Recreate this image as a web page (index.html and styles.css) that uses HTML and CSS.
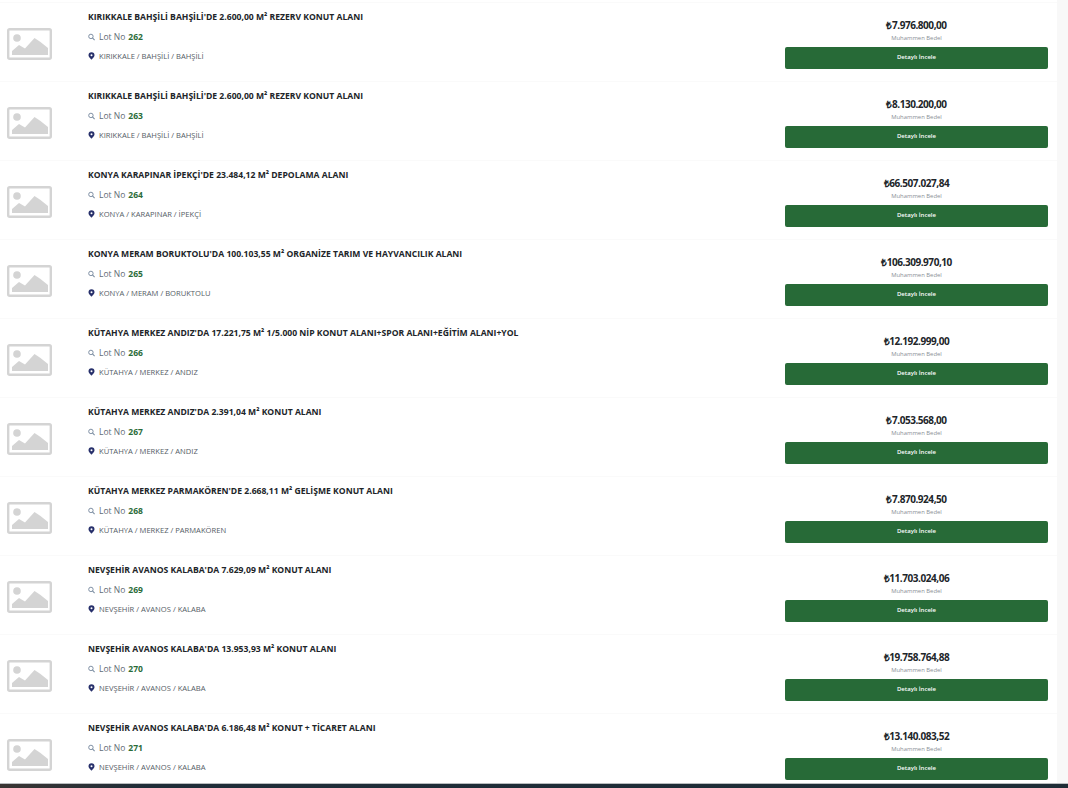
FILE: index.html
```html
<!DOCTYPE html>
<html lang="tr">
<head>
    <meta charset="utf-8">
    <title>Lot Listesi</title>
    <link rel="stylesheet" href="styles.css">
</head>
<body>
    <svg class="defs" width="0" height="0">
        <symbol id="ph" viewBox="0 0 45 32">
            <rect x="1.2" y="1.2" width="42.600" height="29.600" rx="1.500" fill="#fff" stroke="#d4d4d4" stroke-width="2.400"/>
            <circle cx="10" cy="10" r="3.800" fill="#d4d4d4"/>
            <path d="M5 27v-4l7-6 6 3.500 9.500-10.500 6 4 7.500 6v7z" fill="#d4d4d4"/>
        </symbol>
        <symbol id="search" viewBox="0 0 12 12">
            <circle cx="5" cy="5" r="3.800" fill="none" stroke="#7d8fa3" stroke-width="1.700"/>
            <path d="M7.600 7.600l3.800 3.800" stroke="#7d8fa3" stroke-width="2"/>
        </symbol>
        <symbol id="pin" viewBox="0 0 10 12">
            <path d="M5 .5a4.500 4.500 0 0 0-4.500 4.500c0 2.800 4.500 6.500 4.500 6.500s4.500-3.700 4.500-6.500a4.500 4.500 0 0 0-4.500-4.500z" fill="#27306b"/>
            <circle cx="5" cy="4.800" r="1.500" fill="#fff"/>
        </symbol>
    </svg>

    <main class="list">
        <div class="lot">
            <svg class="thumb"><use href="#ph"/></svg>
            <div class="info">
                <h3>KIRIKKALE BAHŞİLİ BAHŞİLİ'DE 2.600,00 M² REZERV KONUT ALANI</h3>
                <p class="no"><svg class="ico"><use href="#search"/></svg>Lot No <b>262</b></p>
                <p class="place"><svg class="ico"><use href="#pin"/></svg>KIRIKKALE / BAHŞİLİ / BAHŞİLİ</p>
            </div>
            <div class="side">
                <strong>₺7.976.800,00</strong>
                <small>Muhammen Bedel</small>
                <a class="btn">Detaylı İncele</a>
            </div>
        </div>
        <div class="lot">
            <svg class="thumb"><use href="#ph"/></svg>
            <div class="info">
                <h3>KIRIKKALE BAHŞİLİ BAHŞİLİ'DE 2.600,00 M² REZERV KONUT ALANI</h3>
                <p class="no"><svg class="ico"><use href="#search"/></svg>Lot No <b>263</b></p>
                <p class="place"><svg class="ico"><use href="#pin"/></svg>KIRIKKALE / BAHŞİLİ / BAHŞİLİ</p>
            </div>
            <div class="side">
                <strong>₺8.130.200,00</strong>
                <small>Muhammen Bedel</small>
                <a class="btn">Detaylı İncele</a>
            </div>
        </div>
        <div class="lot">
            <svg class="thumb"><use href="#ph"/></svg>
            <div class="info">
                <h3>KONYA KARAPINAR İPEKÇİ'DE 23.484,12 M² DEPOLAMA ALANI</h3>
                <p class="no"><svg class="ico"><use href="#search"/></svg>Lot No <b>264</b></p>
                <p class="place"><svg class="ico"><use href="#pin"/></svg>KONYA / KARAPINAR / İPEKÇİ</p>
            </div>
            <div class="side">
                <strong>₺66.507.027,84</strong>
                <small>Muhammen Bedel</small>
                <a class="btn">Detaylı İncele</a>
            </div>
        </div>
        <div class="lot">
            <svg class="thumb"><use href="#ph"/></svg>
            <div class="info">
                <h3>KONYA MERAM BORUKTOLU'DA 100.103,55 M² ORGANİZE TARIM VE HAYVANCILIK ALANI</h3>
                <p class="no"><svg class="ico"><use href="#search"/></svg>Lot No <b>265</b></p>
                <p class="place"><svg class="ico"><use href="#pin"/></svg>KONYA / MERAM / BORUKTOLU</p>
            </div>
            <div class="side">
                <strong>₺106.309.970,10</strong>
                <small>Muhammen Bedel</small>
                <a class="btn">Detaylı İncele</a>
            </div>
        </div>
        <div class="lot">
            <svg class="thumb"><use href="#ph"/></svg>
            <div class="info">
                <h3>KÜTAHYA MERKEZ ANDIZ'DA 17.221,75 M² 1/5.000 NİP KONUT ALANI+SPOR ALANI+EĞİTİM ALANI+YOL</h3>
                <p class="no"><svg class="ico"><use href="#search"/></svg>Lot No <b>266</b></p>
                <p class="place"><svg class="ico"><use href="#pin"/></svg>KÜTAHYA / MERKEZ / ANDIZ</p>
            </div>
            <div class="side">
                <strong>₺12.192.999,00</strong>
                <small>Muhammen Bedel</small>
                <a class="btn">Detaylı İncele</a>
            </div>
        </div>
        <div class="lot">
            <svg class="thumb"><use href="#ph"/></svg>
            <div class="info">
                <h3>KÜTAHYA MERKEZ ANDIZ'DA 2.391,04 M² KONUT ALANI</h3>
                <p class="no"><svg class="ico"><use href="#search"/></svg>Lot No <b>267</b></p>
                <p class="place"><svg class="ico"><use href="#pin"/></svg>KÜTAHYA / MERKEZ / ANDIZ</p>
            </div>
            <div class="side">
                <strong>₺7.053.568,00</strong>
                <small>Muhammen Bedel</small>
                <a class="btn">Detaylı İncele</a>
            </div>
        </div>
        <div class="lot">
            <svg class="thumb"><use href="#ph"/></svg>
            <div class="info">
                <h3>KÜTAHYA MERKEZ PARMAKÖREN'DE 2.668,11 M² GELİŞME KONUT ALANI</h3>
                <p class="no"><svg class="ico"><use href="#search"/></svg>Lot No <b>268</b></p>
                <p class="place"><svg class="ico"><use href="#pin"/></svg>KÜTAHYA / MERKEZ / PARMAKÖREN</p>
            </div>
            <div class="side">
                <strong>₺7.870.924,50</strong>
                <small>Muhammen Bedel</small>
                <a class="btn">Detaylı İncele</a>
            </div>
        </div>
        <div class="lot">
            <svg class="thumb"><use href="#ph"/></svg>
            <div class="info">
                <h3>NEVŞEHİR AVANOS KALABA'DA 7.629,09 M² KONUT ALANI</h3>
                <p class="no"><svg class="ico"><use href="#search"/></svg>Lot No <b>269</b></p>
                <p class="place"><svg class="ico"><use href="#pin"/></svg>NEVŞEHİR / AVANOS / KALABA</p>
            </div>
            <div class="side">
                <strong>₺11.703.024,06</strong>
                <small>Muhammen Bedel</small>
                <a class="btn">Detaylı İncele</a>
            </div>
        </div>
        <div class="lot">
            <svg class="thumb"><use href="#ph"/></svg>
            <div class="info">
                <h3>NEVŞEHİR AVANOS KALABA'DA 13.953,93 M² KONUT ALANI</h3>
                <p class="no"><svg class="ico"><use href="#search"/></svg>Lot No <b>270</b></p>
                <p class="place"><svg class="ico"><use href="#pin"/></svg>NEVŞEHİR / AVANOS / KALABA</p>
            </div>
            <div class="side">
                <strong>₺19.758.764,88</strong>
                <small>Muhammen Bedel</small>
                <a class="btn">Detaylı İncele</a>
            </div>
        </div>
        <div class="lot">
            <svg class="thumb"><use href="#ph"/></svg>
            <div class="info">
                <h3>NEVŞEHİR AVANOS KALABA'DA 6.186,48 M² KONUT + TİCARET ALANI</h3>
                <p class="no"><svg class="ico"><use href="#search"/></svg>Lot No <b>271</b></p>
                <p class="place"><svg class="ico"><use href="#pin"/></svg>NEVŞEHİR / AVANOS / KALABA</p>
            </div>
            <div class="side">
                <strong>₺13.140.083,52</strong>
                <small>Muhammen Bedel</small>
                <a class="btn">Detaylı İncele</a>
            </div>
        </div>
    </main>
    <div class="taskbar"></div>
</body>
</html>
```

FILE: styles.css
```css
html, body { margin: 0; height: 100%; overflow: hidden; }
body { display: flex; flex-direction: column; background: #f8f8f8; font-family: "Open Sans", sans-serif; color: #212529; }
.defs { display: block; height: 0; }
.list { flex: 1; min-height: 0; overflow: hidden; width: 1057px; padding-top: 2px; background: #fff; box-sizing: border-box; }
.lot { display: flex; height: 79px; box-sizing: border-box; border-top: 1px solid #fafafa; flex-shrink: 0; }
.thumb { width: 45px; height: 32px; margin: 25px 0 0 7px; flex-shrink: 0; }
.info { flex: 1; padding: 8px 0 0 36px; }
.info h3 { margin: 0; font-size: 8.600px; line-height: 12px; font-weight: 700; color: #212529; }
.no { display: flex; align-items: center; margin: 8px 0 0; font-size: 8.500px; line-height: 12px; color: #5f6b76; }
.no b { margin-left: 3px; font-weight: 700; color: #2a6b38; }
.place { display: flex; align-items: center; margin: 7px 0 0; font-size: 7.600px; line-height: 12px; color: #555d66; }
.ico { width: 7px; height: 8px; margin-right: 4px; flex-shrink: 0; }
.side { width: 263px; margin-right: 9px; padding-top: 15px; text-align: center; }
.side strong { display: block; font-size: 10px; letter-spacing: -.45px; line-height: 14px; font-weight: 700; color: #212529; }
.side small { display: block; font-size: 5.900px; line-height: 9px; color: #8a8f96; margin-top: 2px; }
.btn { display: block; height: 22px; margin-top: 4px; background: #276a37; border-radius: 2px; color: #fff; font-size: 6px; font-weight: 600; line-height: 21px; }
.taskbar { height: 5px; box-sizing: border-box; flex-shrink: 0; border-top: 1px solid #b9bdbf; background: linear-gradient(90deg, #3a3533, #1f2d38 14%, #1e2c36); }
```
